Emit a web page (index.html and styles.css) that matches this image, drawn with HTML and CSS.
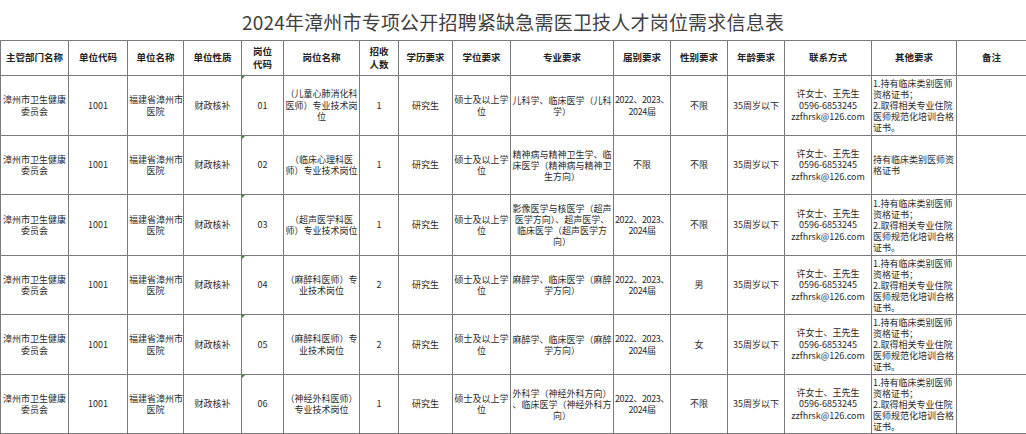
FILE: index.html
```html
<!DOCTYPE html>
<html lang="zh-CN">
<head>
<meta charset="utf-8">
<title>2024年漳州市专项公开招聘紧缺急需医卫技人才岗位需求信息表</title>
<link rel="stylesheet" href="styles.css">
</head>
<body>
<div class="sheet">
  <h1 class="title">2024年漳州市专项公开招聘紧缺急需医卫技人才岗位需求信息表</h1>
  <table class="grid">
    <colgroup>
      <col class="w68"><col class="w59"><col class="w56"><col class="w58"><col class="w42"><col class="w76"><col class="w39"><col class="w54"><col class="w58"><col class="w103"><col class="w57"><col class="w57"><col class="w57"><col class="w87"><col class="w85"><col class="w70">
    </colgroup>
    <thead>
      <tr class="head">
        <th>主管部门名称</th><th>单位代码</th><th>单位名称</th><th>单位性质</th><th>岗位<br>代码</th><th>岗位名称</th><th>招收<br>人数</th><th>学历要求</th><th>学位要求</th><th>专业要求</th><th>届别要求</th><th>性别要求</th><th>年龄要求</th><th>联系方式</th><th>其他要求</th><th>备注</th>
      </tr>
    </thead>
    <tbody>
      <tr class="r60">
        <td>漳州市卫生健康<br>委员会</td><td>1001</td><td>福建省漳州市<br>医院</td><td>财政核补</td><td class="code">01</td>
        <td>（儿童心肺消化科<br>医师）专业技术岗<br>位</td><td>1</td><td>研究生</td><td>硕士及以上学<br>位</td>
        <td class="major">儿科学、临床医学（儿科<br>学）</td><td class="year">2022、2023、<br>2024届</td><td>不限</td><td>35周岁以下</td>
        <td>许女士、王先生<br>0596-6853245<br>zzfhrsk@126.com</td>
        <td class="other">1.持有临床类别医师<br>资格证书；<br>2.取得相关专业住院<br>医师规范化培训合格<br>证书。</td><td></td>
      </tr>
      <tr class="r59">
        <td>漳州市卫生健康<br>委员会</td><td>1001</td><td>福建省漳州市<br>医院</td><td>财政核补</td><td class="code">02</td>
        <td>（临床心理科医<br>师）专业技术岗位</td><td>1</td><td>研究生</td><td>硕士及以上学<br>位</td>
        <td class="major">精神病与精神卫生学、临<br>床医学（精神病与精神卫<br>生方向）</td><td>不限</td><td>不限</td><td>35周岁以下</td>
        <td>许女士、王先生<br>0596-6853245<br>zzfhrsk@126.com</td>
        <td class="other">持有临床类别医师资<br>格证书</td><td></td>
      </tr>
      <tr class="r61">
        <td>漳州市卫生健康<br>委员会</td><td>1001</td><td>福建省漳州市<br>医院</td><td>财政核补</td><td class="code">03</td>
        <td>（超声医学科医<br>师）专业技术岗位</td><td>1</td><td>研究生</td><td>硕士及以上学<br>位</td>
        <td class="major">影像医学与核医学（超声<br>医学方向）、超声医学、<br>临床医学（超声医学方<br>向）</td><td class="year">2022、2023、<br>2024届</td><td>不限</td><td>35周岁以下</td>
        <td>许女士、王先生<br>0596-6853245<br>zzfhrsk@126.com</td>
        <td class="other">1.持有临床类别医师<br>资格证书；<br>2.取得相关专业住院<br>医师规范化培训合格<br>证书。</td><td></td>
      </tr>
      <tr class="r59">
        <td>漳州市卫生健康<br>委员会</td><td>1001</td><td>福建省漳州市<br>医院</td><td>财政核补</td><td class="code">04</td>
        <td>（麻醉科医师）专<br>业技术岗位</td><td>2</td><td>研究生</td><td>硕士及以上学<br>位</td>
        <td class="major">麻醉学、临床医学（麻醉<br>学方向）</td><td class="year">2022、2023、<br>2024届</td><td>男</td><td>35周岁以下</td>
        <td>许女士、王先生<br>0596-6853245<br>zzfhrsk@126.com</td>
        <td class="other">1.持有临床类别医师<br>资格证书；<br>2.取得相关专业住院<br>医师规范化培训合格<br>证书。</td><td></td>
      </tr>
      <tr class="r60">
        <td>漳州市卫生健康<br>委员会</td><td>1001</td><td>福建省漳州市<br>医院</td><td>财政核补</td><td class="code">05</td>
        <td>（麻醉科医师）专<br>业技术岗位</td><td>2</td><td>研究生</td><td>硕士及以上学<br>位</td>
        <td class="major">麻醉学、临床医学（麻醉<br>学方向）</td><td class="year">2022、2023、<br>2024届</td><td>女</td><td>35周岁以下</td>
        <td>许女士、王先生<br>0596-6853245<br>zzfhrsk@126.com</td>
        <td class="other">1.持有临床类别医师<br>资格证书；<br>2.取得相关专业住院<br>医师规范化培训合格<br>证书。</td><td></td>
      </tr>
      <tr class="r59">
        <td>漳州市卫生健康<br>委员会</td><td>1001</td><td>福建省漳州市<br>医院</td><td>财政核补</td><td class="code">06</td>
        <td>（神经外科医师）<br>专业技术岗位</td><td>1</td><td>研究生</td><td>硕士及以上学<br>位</td>
        <td class="major">外科学（神经外科方向）<br>、临床医学（神经外科方<br>向）</td><td class="year">2022、2023、<br>2024届</td><td>不限</td><td>35周岁以下</td>
        <td>许女士、王先生<br>0596-6853245<br>zzfhrsk@126.com</td>
        <td class="other">1.持有临床类别医师<br>资格证书；<br>2.取得相关专业住院<br>医师规范化培训合格<br>证书。</td><td></td>
      </tr>
    </tbody>
  </table>
</div>
</body>
</html>
```
FILE: styles.css
```css
html, body {
  margin: 0;
  padding: 0;
  background: #ffffff;
}
body {
  font-family: "Noto Sans CJK SC", "Noto Sans", sans-serif;
  color: #2a2a2a;
  overflow: hidden;
}
.sheet {
  width: 1026px;
}
.title {
  margin: 0;
  height: 40px;
  padding-top: 3px;
  box-sizing: border-box;
  display: flex;
  align-items: center;
  justify-content: center;
  font-size: 19px;
  font-weight: normal;
  color: #404040;
  letter-spacing: 0.2px;
}
.grid {
  width: 1026px;
  table-layout: fixed;
  border-collapse: collapse;
}
.grid th, .grid td {
  border: 1px solid #7a7a7a;
  padding: 0 1px;
  text-align: center;
  vertical-align: middle;
  font-size: 9px;
  line-height: 11.5px;
  overflow: hidden;
  white-space: nowrap;
}
.grid th {
  font-weight: bold;
  font-size: 9.5px;
  line-height: 13.5px;
  color: #222;
}
.head { height: 35px; }
.r60 { height: 60px; }
.r59 { height: 59px; }
.r61 { height: 61px; }
.grid td.major { line-height: 11px; }
.grid td.other {
  text-align: left;
  line-height: 11px;
  padding-left: 1px;
}
.grid td.year {
  padding: 0;
  letter-spacing: -0.4px;
}
.grid td.code {
  position: relative;
}
.grid td.code::before {
  content: "";
  position: absolute;
  left: 0;
  top: 0;
  border-top: 3px solid #2e8b2e;
  border-right: 3px solid transparent;
}
.w68 { width: 68px; }
.w59 { width: 59px; }
.w56 { width: 56px; }
.w58 { width: 58px; }
.w42 { width: 42px; }
.w76 { width: 76px; }
.w39 { width: 39px; }
.w54 { width: 54px; }
.w103 { width: 103px; }
.w57 { width: 57px; }
.w87 { width: 87px; }
.w85 { width: 85px; }
.w70 { width: 70px; }
```
